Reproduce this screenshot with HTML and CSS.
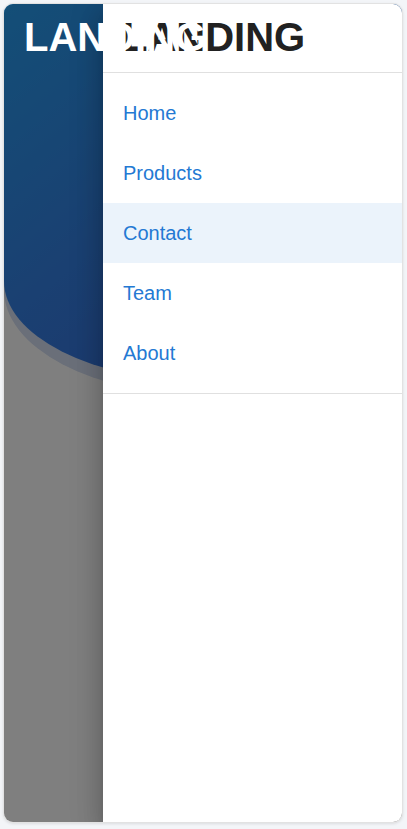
FILE: index.html
```html
<!DOCTYPE html>
<html lang="en">
<head>
<meta charset="utf-8">
<title>Landing</title>
<link rel="stylesheet" href="styles.css">
</head>
<body>
<div class="card">
  <div class="page">
    <div class="hero-band">
      <header class="hero">
        <h1 class="hero-title">LANDING</h1>
      </header>
    </div>
  </div>
  <div class="overlay"></div>
  <aside class="drawer">
    <div class="drawer-header">
      <h2 class="drawer-title">LANDING</h2>
    </div>
    <ul class="nav">
      <li><a class="nav-link" href="#">Home</a></li>
      <li><a class="nav-link" href="#">Products</a></li>
      <li><a class="nav-link active" href="#">Contact</a></li>
      <li><a class="nav-link" href="#">Team</a></li>
      <li><a class="nav-link" href="#">About</a></li>
    </ul>
  </aside>
</div>
</body>
</html>
```

FILE: styles.css
```css
* { box-sizing: border-box; }

html, body {
  margin: 0;
  padding: 0;
}

body {
  background: #f3f5f8;
  font-family: "Liberation Sans", Arial, sans-serif;
}

.card {
  position: relative;
  margin: 3px;
  width: 400px;
  height: 820px;
  background: #ffffff;
  border: 1px solid #e2e2e2;
  border-radius: 10px;
  overflow: hidden;
  box-shadow: 0 1px 3px rgba(0, 0, 0, 0.10);
}

.page {
  width: 100%;
}

.hero-band {
  height: 391px;
  background: #d4def2;
  border-radius: 0 0 50% 50% / 0 0 105px 105px;
}

.hero {
  height: 377px;
  padding: 10px 20px 0;
  background: linear-gradient(140deg, #279def 0%, #3580e4 45%, #3a62d2 100%);
  border-radius: 0 0 50% 50% / 0 0 100px 100px;
}

.hero-title {
  position: relative;
  z-index: 3;
  margin: 0;
  font-size: 40px;
  line-height: 46px;
  font-weight: 700;
  color: #ffffff;
  white-space: nowrap;
}

.overlay {
  position: absolute;
  inset: 0;
  z-index: 1;
  background: rgba(0, 0, 0, 0.5);
}

.drawer {
  position: absolute;
  top: 0;
  right: 0;
  bottom: 0;
  z-index: 2;
  width: 299px;
  background: #ffffff;
  box-shadow: 0 8px 10px -5px rgba(0, 0, 0, 0.2),
              0 16px 24px 2px rgba(0, 0, 0, 0.14),
              0 6px 30px 5px rgba(0, 0, 0, 0.12);
}

.drawer-header {
  padding: 10px 20px 12px;
  border-bottom: 1px solid #e0e0e0;
}

.drawer-title {
  margin: 0;
  font-size: 40px;
  line-height: 46px;
  font-weight: 700;
  color: #212121;
}

.nav {
  list-style: none;
  margin: 0;
  padding: 10px 0;
  border-bottom: 1px solid #e0e0e0;
}

.nav-link {
  display: flex;
  align-items: center;
  height: 60px;
  padding: 0 20px;
  font-size: 20px;
  color: #2479d3;
  text-decoration: none;
}

.nav-link.active {
  background: #ebf3fb;
}
```
